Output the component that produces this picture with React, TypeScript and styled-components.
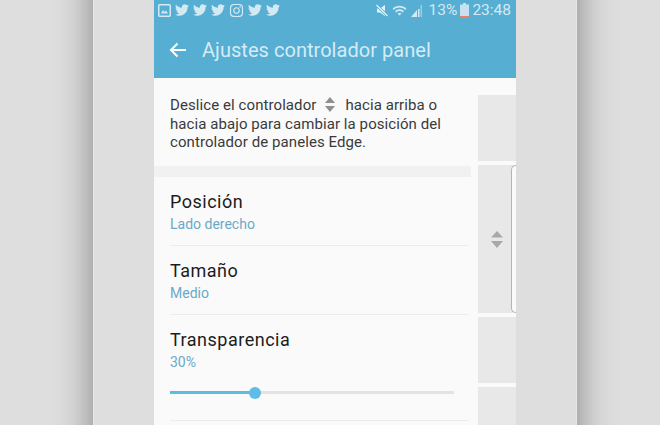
import { createGlobalStyle, styled } from "styled-components";
import { FaTwitter, FaInstagram } from "react-icons/fa";
import { MdWifi } from "react-icons/md";

const GlobalStyle = createGlobalStyle`
  html, body {
    margin: 0;
    padding: 0;
    background: #dedede;
    overflow: hidden;
  }
  body {
    font-family: Roboto, "Liberation Sans", sans-serif;
  }
`;

const settings = [
  { title: "Posición", value: "Lado derecho" },
  { title: "Tamaño", value: "Medio" },
];

const App = () => {
  return (
    <Page>
      <GlobalStyle />
      <Phone>
        <Screen>
          <Header>
            <StatusBar>
              <StatusLeft>
                <GalleryIcon />
                <FaTwitter size={14} />
                <FaTwitter size={14} />
                <FaTwitter size={14} />
                <FaInstagram size={15} />
                <FaTwitter size={14} />
                <FaTwitter size={14} />
              </StatusLeft>
              <StatusRight>
                <MuteIcon />
                <MdWifi size={15} />
                <SignalIcon />
                <StatusText>13%</StatusText>
                <Battery />
                <StatusText>23:48</StatusText>
              </StatusRight>
            </StatusBar>
            <AppBar>
              <svg width="18" height="16" viewBox="0 0 18 16" fill="none" stroke="#fff" strokeWidth="2">
                <path d="M17 8H2M8.5 1.5 2 8l6.5 6.5" />
              </svg>
              <Title>Ajustes controlador panel</Title>
            </AppBar>
          </Header>
          <Body>
            <Main>
              <Description>
                <div>
                  Deslice el controlador
                  <InlineArrows width="10" height="15" viewBox="0 0 10 15">
                    <path d="M5 0 10 6H0ZM0 9h10L5 15Z" />
                  </InlineArrows>
                  hacia arriba o
                </div>
                <div>hacia abajo para cambiar la posición del</div>
                <div>controlador de paneles Edge.</div>
              </Description>
              <Band />
              {settings.map((s) => (
                <Row key={s.title}>
                  <RowTitle>{s.title}</RowTitle>
                  <RowValue>{s.value}</RowValue>
                </Row>
              ))}
              <SliderRow>
                <RowTitle>Transparencia</RowTitle>
                <RowValue>30%</RowValue>
                <Track>
                  <Fill />
                  <Thumb />
                </Track>
              </SliderRow>
            </Main>
            <Side>
              <Slot $h={66} />
              <Slot $h={148} $active>
                <Handle />
                <svg width="12" height="17" viewBox="0 0 12 17" fill="#a9a9a9">
                  <path d="M6 0 12 6.5H0ZM0 10h12L6 17Z" />
                </svg>
              </Slot>
              <Slot $h={66} />
              <Slot $h={66} />
            </Side>
          </Body>
        </Screen>
      </Phone>
    </Page>
  );
};
export default App;

const GalleryIcon = () => (
  <svg width="13" height="13" viewBox="0 0 13 13">
    <rect x="0.75" y="0.75" width="11.5" height="11.5" rx="1" fill="none" stroke="#d3eaf4" strokeWidth="1.5" />
    <path d="M3 9.5 5 6l1.5 2L8 6.5l2 3Z" fill="#d3eaf4" />
  </svg>
);

const MuteIcon = () => (
  <svg width="14" height="13" viewBox="0 0 14 13">
    <path d="M2 4.5h3L10 1v11L5 8.5H2Z" fill="#e4f2f8" />
    <path d="M1.5 1 12.5 12" stroke="#56aed3" strokeWidth="2.6" />
    <path d="M1.5 1 12.5 12" stroke="#e4f2f8" strokeWidth="1.3" />
  </svg>
);

const SignalIcon = () => (
  <svg width="13" height="13" viewBox="0 0 13 13" fill="#d3eaf4">
    <path d="M1 13 7 6v7Z" />
    <path d="M8 5h1.5v8H8Z" />
    <path d="M10.5 1H12v12h-1.5Z" opacity="0.55" />
  </svg>
);

const Battery = () => (
  <svg width="9" height="15" viewBox="0 0 9 15">
    <path d="M3 0h3v1.5h3V15H0V1.5h3Z" fill="#c6e2ee" />
    <path d="M0 13h9v2H0Z" fill="#e8825f" />
  </svg>
);

const Page = styled.div`
  width: 660px;
  height: 425px;
  display: flex;
  justify-content: flex-start;
  padding-left: 93px;
  box-sizing: border-box;
  overflow: hidden;
  background: #dedede;
`;
/* runs past the window top and bottom so the side shadow stays even */
const Phone = styled.div`
  flex: none;
  width: 484px;
  height: 505px;
  margin-top: -40px;
  padding: 40px 60px;
  box-sizing: border-box;
  border: solid #e6e6e6;
  border-width: 0 1px;
  background: #dedede;
  box-shadow: 0 0 34px rgba(0, 0, 0, 0.42);
`;
const Screen = styled.div`
  width: 362px;
  height: 425px;
  overflow: hidden;
  background: #fafafa;
`;
const Header = styled.header`
  height: 78px;
  background: #56aed3;
  color: #d3eaf4;
`;
const StatusBar = styled.div`
  height: 20px;
  display: flex;
  align-items: center;
  justify-content: space-between;
  padding: 0 5px 0 4px;
`;
const StatusLeft = styled.div`
  display: flex;
  align-items: center;
  gap: 4px;
`;
const StatusRight = styled.div`
  display: flex;
  align-items: center;
  gap: 3px;
`;
const StatusText = styled.span`
  font-size: 15.5px;
  &:first-of-type {
    margin-left: 3px;
  }
`;
const AppBar = styled.div`
  height: 58px;
  display: flex;
  align-items: center;
  gap: 15px;
  padding: 2px 0 0 15px;
  box-sizing: border-box;
`;
const Title = styled.h1`
  margin: 0;
  font-size: 20px;
  font-weight: 400;
  letter-spacing: 0.04px;
  color: #d5ebf5;
`;
const Body = styled.div`
  display: flex;
  background: #fafafa;
`;
const Main = styled.div`
  width: 317px;
`;
const Description = styled.div`
  height: 88px;
  padding: 18px 0 0 16px;
  box-sizing: border-box;
  font-size: 15px;
  letter-spacing: 0.08px;
  line-height: 18.5px;
  color: #3a3a3a;
  white-space: nowrap;
`;
const InlineArrows = styled.svg`
  fill: #8f8f8f;
  margin: 0 10px 0 9px;
  vertical-align: -2px;
`;
const Band = styled.div`
  height: 11px;
  background: #f1f1f1;
`;
const Row = styled.div`
  height: 69px;
  margin: 0 3px 0 16px;
  padding-top: 13px;
  box-sizing: border-box;
  border-bottom: 1px solid #ececec;
`;
const SliderRow = styled(Row)`
  height: 106px;
`;
const RowTitle = styled.div`
  font-size: 18px;
  line-height: 24px;
  color: #1c1c1c;
  letter-spacing: 0.5px;
`;
const RowValue = styled.div`
  font-size: 14px;
  line-height: 20px;
  color: #69a9c8;
`;
const Track = styled.div`
  position: relative;
  display: flex;
  align-items: center;
  width: 284px;
  height: 3px;
  margin-top: 19px;
  background: #e3e3e3;
`;
const Fill = styled.div`
  width: 85px;
  height: 3px;
  background: #5dbde6;
`;
const Thumb = styled.div`
  width: 12px;
  height: 12px;
  margin-left: -6px;
  border-radius: 50%;
  background: #5dbde6;
`;
const Side = styled.aside`
  width: 38px;
  margin: 17px 0 0 7px;
  display: flex;
  flex-direction: column;
  gap: 4px;
`;
const Slot = styled.div<{ $h: number; $active?: boolean }>`
  position: relative;
  flex: none;
  height: ${(p) => p.$h}px;
  display: flex;
  align-items: center;
  justify-content: flex-start;
  padding-left: 13px;
  box-sizing: border-box;
  background: #e8e8e8;
`;
const Handle = styled.div`
  position: absolute;
  top: 0;
  right: 0;
  bottom: 0;
  width: 4px;
  border: 1px solid #b4b4b4;
  border-right: none;
  border-radius: 5px 0 0 5px;
  background: #fafafa;
`;
